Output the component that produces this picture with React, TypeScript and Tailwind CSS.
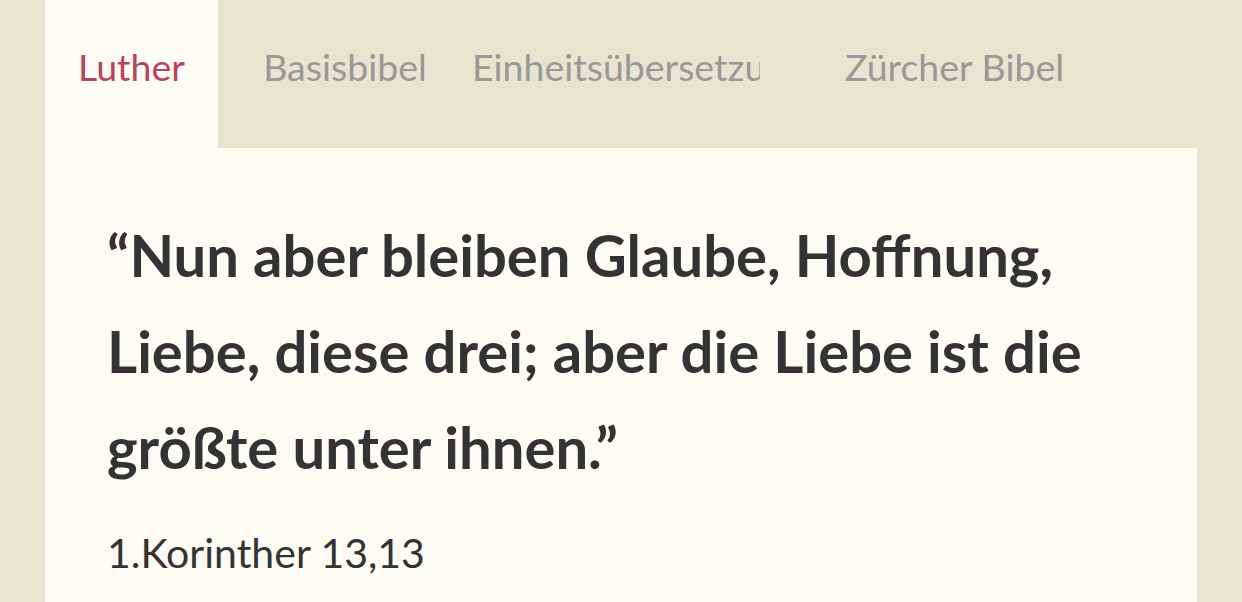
const tabs = [
  { label: 'Luther', cls: 'w-[173px] justify-center' },
  { label: 'Basisbibel', cls: 'w-[254px] justify-center' },
  { label: 'Einheitsübersetzung', cls: 'w-[288px] justify-start' },
  { label: 'Zürcher Bibel', cls: 'w-[389px] justify-center' },
]

export default function App() {
  return (
    <div
      className="h-[602px] w-[1242px] overflow-hidden bg-[#e7e5cf] px-[45px]"
      style={{ fontFamily: 'Lato, "Open Sans", sans-serif' }}
    >
      <nav className="flex h-[148px]">
        {tabs.map((t, i) => (
          <div
            key={t.label}
            className={`flex h-full items-center overflow-hidden whitespace-nowrap pb-[14px] text-[37.5px] ${t.cls} ${
              i === 0 ? 'bg-[#fefbf3] text-[#b4475e]' : 'text-[#9a9896]'
            }`}
          >
            {t.label}
          </div>
        ))}
      </nav>

      <main className="h-[454px] bg-[#fefbf3] px-[62px] pt-[59px]">
        <blockquote className="text-[58px] font-bold leading-[96px] text-[#333333]">
          <span className="block">“Nun aber bleiben Glaube, Hoffnung,</span>
          <span className="block">Liebe, diese drei; aber die Liebe ist die</span>
          <span className="block">größte unter ihnen.”</span>
        </blockquote>
        <p className="mt-[27px] text-[41px] text-[#333333]">1.Korinther 13,13</p>
      </main>
    </div>
  )
}
